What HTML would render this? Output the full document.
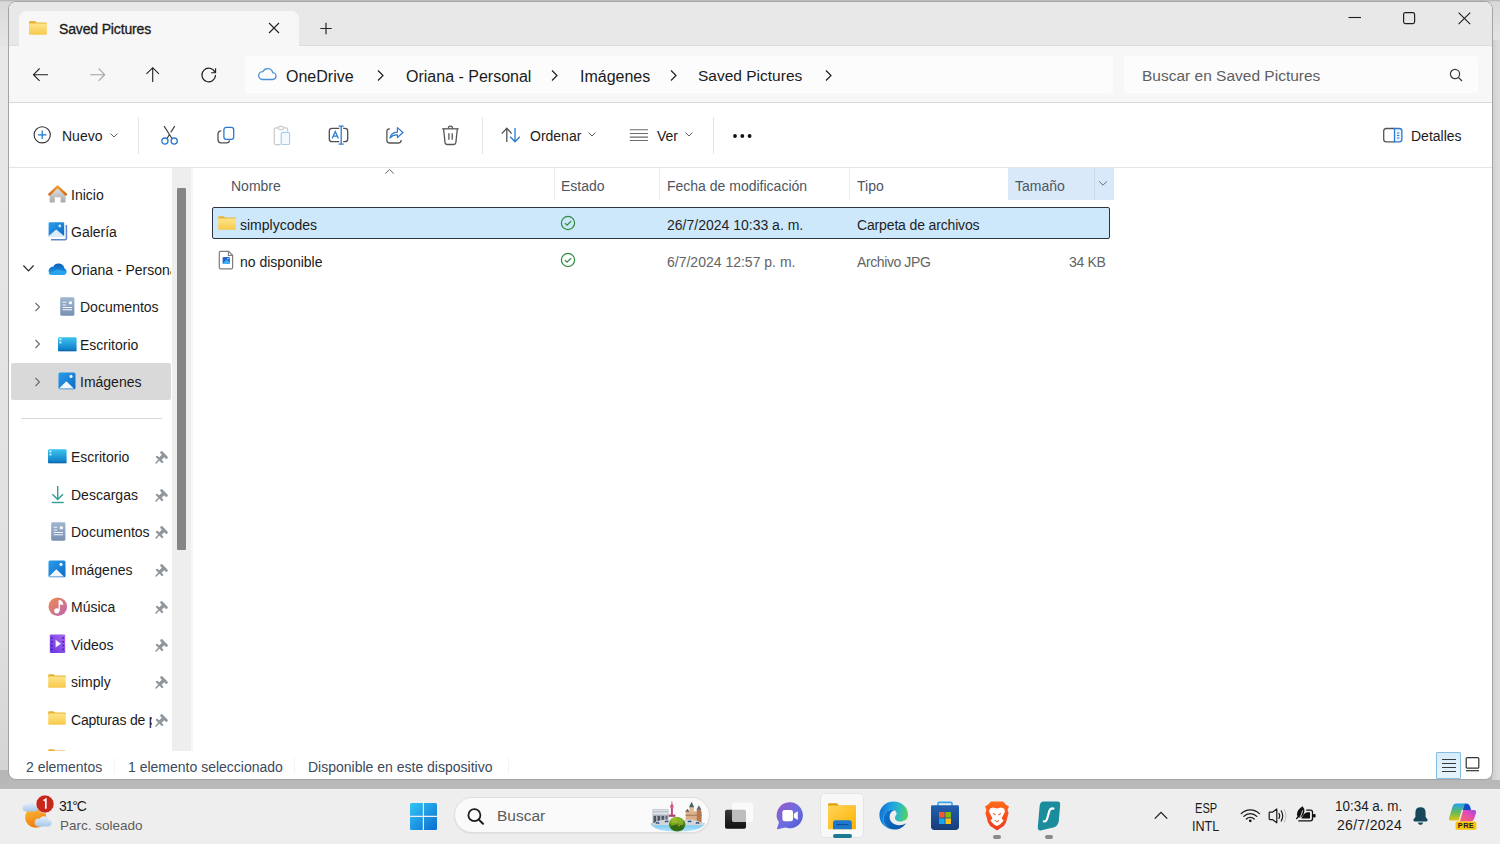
<!DOCTYPE html>
<html><head><meta charset="utf-8">
<style>
*{box-sizing:border-box;margin:0;padding:0}
html,body{width:1500px;height:844px;overflow:hidden}
body{position:relative;background:#dcdcdc;font-family:"Liberation Sans",sans-serif;color:#1b1b1b}
.a{position:absolute}
.t{position:absolute;white-space:nowrap;font-size:14px;line-height:20px}
.t16{position:absolute;white-space:nowrap;font-size:16px;line-height:22px}
svg{position:absolute;overflow:visible}
#desk{left:0;top:0;width:1500px;height:789px;background:linear-gradient(#b0b0b0 0,#d9d9d9 2px,#e4e4e4 40px,#e6e6e6 100%)}
#win{left:8px;top:1px;width:1485px;height:779px;border:1px solid #a4a4a4;border-radius:8px;background:#fff;overflow:hidden}
#tabbar{left:0;top:0;width:1483px;height:45px;background:#e8e8e8}
#tab{left:10px;top:9px;width:280px;height:36px;background:#f7f7f7;border-radius:8px 8px 0 0}
#nav{left:0;top:43px;width:1483px;height:58px;background:#f7f7f7;border-top:1px solid #dcdcdc;border-bottom:1px solid #d9d9d9}
#addr{left:245px;top:56px;width:868px;height:37px;background:#fcfcfc;border-radius:3px}
#search{left:1124px;top:56px;width:354px;height:37px;background:#fcfcfc;border-radius:3px}
#cmd{left:0;top:101px;width:1483px;height:65px;background:#fff;border-bottom:1px solid #e5e5e5}
.sep{position:absolute;width:1px;background:#e3e3e3}
#taskbar{left:0;top:789px;width:1500px;height:55px;background:#eeeeee;border-top:1px solid #f3f3f3}
.hdr{color:#4d5663}
.stat{color:#3c4a5c}
</style></head><body>
<div id="desk" class="a"></div>
<div class="a" style="left:0;top:770px;width:1500px;height:19px;background:linear-gradient(#b6b6b6,#b9b9b9)"></div>
<div class="a" style="left:1492px;top:40px;width:8px;height:740px;background:linear-gradient(90deg,#cfcfcf,#dedede)"></div>
<div class="a" style="left:0;top:46px;width:8px;height:724px;background:linear-gradient(#e8e8e8,#e0e0e0 80%,#d4d4d4)"></div>
<div id="win" class="a">
  <div id="tabbar" class="a"></div>
  <div id="tab" class="a"></div>
  <div id="nav" class="a"></div>
  <div class="a" style="left:10px;top:43px;width:280px;height:1px;background:#f7f7f7"></div>
  <div id="cmd" class="a"></div>
</div>
<div id="addr" class="a"></div>
<div id="search" class="a"></div>
<div id="taskbar" class="a"></div>
<!-- sidebar scroll track & thumb -->
<div class="a" style="left:172px;top:168px;width:19px;height:583px;background:#eeeeee"></div><div class="a" style="left:191px;top:168px;width:2px;height:583px;background:#f7f7f7"></div>
<div class="a" style="left:177px;top:188px;width:9px;height:362px;background:#858585;border-radius:1px"></div>
<!-- sidebar selection -->
<div class="a" style="left:11px;top:363px;width:160px;height:37px;background:#d9d9d9;border-radius:2px"></div>
<div class="a" style="left:21px;top:418px;width:141px;height:1px;background:#d9d9d9"></div>
<!-- header separators -->
<div class="sep" style="left:554px;top:168px;height:32px;background:#ececec"></div>
<div class="sep" style="left:659px;top:168px;height:32px;background:#ececec"></div>
<div class="sep" style="left:849px;top:168px;height:32px;background:#ececec"></div>
<div class="a" style="left:1008px;top:168px;width:106px;height:32px;background:#d9e9f9"></div>
<div class="a" style="left:1094px;top:168px;width:1px;height:32px;background:#c8dbee"></div>
<!-- selected row -->
<div class="a" style="left:212px;top:207px;width:898px;height:32px;background:#cde8fb;border:1px solid #2c3440;border-radius:2px"></div>
<!-- status separators -->
<div class="sep" style="left:114px;top:758px;height:16px;background:#f4f4f4"></div>
<div class="sep" style="left:294px;top:758px;height:16px;background:#f4f4f4"></div>
<div class="sep" style="left:508px;top:758px;height:16px;background:#f4f4f4"></div>
<!-- cmd separators -->
<div class="sep" style="left:138px;top:117px;height:37px;background:#e6e6e6"></div>
<div class="sep" style="left:482px;top:117px;height:37px;background:#e6e6e6"></div>
<div class="sep" style="left:713px;top:117px;height:37px;background:#e6e6e6"></div>
<!-- view toggle -->
<div class="a" style="left:1436px;top:752px;width:25px;height:27px;background:linear-gradient(#d6ecfa,#e8f4fc);border:1px solid #86bde0;border-radius:1px"></div>
<!-- taskbar search pill -->
<div class="a" style="left:454px;top:797px;width:256px;height:36px;background:#fafafa;border:1px solid #dedede;border-radius:18px;box-shadow:0 1px 1px rgba(0,0,0,0.06)"></div>
<!-- explorer active tile -->
<div class="a" style="left:820px;top:793px;width:44px;height:45px;background:#f8f8f8;border:1px solid #e4e4e4;border-radius:5px"></div>


<!-- tab -->
<div class="t" style="left:59px;top:19px;letter-spacing:-0.15px;-webkit-text-stroke:0.3px #1a1a1a;color:#1a1a1a">Saved Pictures</div>
<!-- address -->
<div class="t16" style="left:286px;top:66px">OneDrive</div>
<div class="t16" style="left:406px;top:66px">Oriana - Personal</div>
<div class="t16" style="left:580px;top:66px">Imágenes</div>
<div class="t16" style="left:698px;top:65px;font-size:15.5px">Saved Pictures</div>
<div class="t16" style="left:1142px;top:65px;font-size:15.5px;color:#5f5f5f">Buscar en Saved Pictures</div>
<!-- commands -->
<div class="t" style="left:62px;top:126px">Nuevo</div>
<div class="t" style="left:530px;top:126px">Ordenar</div>
<div class="t" style="left:657px;top:126px">Ver</div>
<div class="t" style="left:1411px;top:126px">Detalles</div>
<!-- sidebar -->
<div class="t" style="left:71px;top:185px">Inicio</div>
<div class="t" style="left:71px;top:222px">Galería</div>
<div class="a" style="left:71px;top:259px;width:100px;height:22px;overflow:hidden"><div class="t" style="left:0;top:1px">Oriana - Personal</div></div>
<div class="t" style="left:80px;top:297px">Documentos</div>
<div class="t" style="left:80px;top:335px">Escritorio</div>
<div class="t" style="left:80px;top:372px">Imágenes</div>
<div class="t" style="left:71px;top:447px">Escritorio</div>
<div class="t" style="left:71px;top:485px">Descargas</div>
<div class="t" style="left:71px;top:522px">Documentos</div>
<div class="t" style="left:71px;top:560px">Imágenes</div>
<div class="t" style="left:71px;top:597px">Música</div>
<div class="t" style="left:71px;top:635px">Videos</div>
<div class="t" style="left:71px;top:672px">simply</div>
<div class="a" style="left:71px;top:708px;width:81px;height:22px;overflow:hidden"><div class="t" style="left:0;top:2px;letter-spacing:-0.2px">Capturas de pantalla</div></div>
<!-- header -->
<div class="t hdr" style="left:231px;top:176px">Nombre</div>
<div class="t hdr" style="left:561px;top:176px">Estado</div>
<div class="t hdr" style="left:667px;top:176px">Fecha de modificación</div>
<div class="t hdr" style="left:857px;top:176px">Tipo</div>
<div class="t hdr" style="left:1015px;top:176px">Tamaño</div>
<!-- rows -->
<div class="t" style="left:240px;top:215px">simplycodes</div>
<div class="t" style="left:667px;top:215px;color:#1f1f1f">26/7/2024 10:33 a. m.</div>
<div class="t" style="left:857px;top:215px;color:#1f1f1f;letter-spacing:-0.15px">Carpeta de archivos</div>
<div class="t" style="left:240px;top:252px">no disponible</div>
<div class="t" style="left:667px;top:252px;color:#646464">6/7/2024 12:57 p. m.</div>
<div class="t" style="left:857px;top:252px;color:#646464;letter-spacing:-0.4px">Archivo JPG</div>
<div class="t" style="left:1069px;top:252px;color:#646464;letter-spacing:-0.3px">34 KB</div>
<!-- status -->
<div class="t stat" style="left:26px;top:757px">2 elementos</div>
<div class="t stat" style="left:128px;top:757px">1 elemento seleccionado</div>
<div class="t stat" style="left:308px;top:757px">Disponible en este dispositivo</div>
<!-- taskbar text -->
<div class="t" style="left:59px;top:796px;letter-spacing:-1.1px;color:#1a1a1a">31°C</div>
<div class="t" style="left:60px;top:816px;font-size:13.5px;color:#5c5c5c">Parc. soleado</div>
<div class="t" style="left:497px;top:806px;font-size:15.5px;color:#5a5a5a">Buscar</div>
<div class="t" style="left:1195px;top:798px;transform:scaleX(0.79);transform-origin:0 0">ESP</div>
<div class="t" style="left:1192px;top:816px;transform:scaleX(0.9);transform-origin:0 0">INTL</div>
<div class="t" style="left:1335px;top:796px;transform:scaleX(0.96);transform-origin:0 0">10:34 a. m.</div>
<div class="t" style="left:1337px;top:815px;letter-spacing:0.3px">26/7/2024</div>

<!-- tab folder icon -->
<svg style="left:28px;top:20px" width="20" height="16" viewBox="0 0 20 16">
<defs><linearGradient id="fg" x1="0" y1="0" x2="0" y2="1"><stop offset="0" stop-color="#fde58a"/><stop offset="1" stop-color="#f7c94a"/></linearGradient></defs>
<path d="M1 2.2 Q1 1 2.2 1 H7 L8.6 2.6 H17.6 Q18.8 2.6 18.8 3.8 V5 H1 Z" fill="#e9b535"/>
<rect x="1" y="3.6" width="17.8" height="11.2" rx="1" fill="url(#fg)"/>
</svg>
<!-- tab close -->
<svg style="left:268px;top:22px" width="12" height="12" viewBox="0 0 12 12"><path d="M1 1 L11 11 M11 1 L1 11" stroke="#1f1f1f" stroke-width="1.1"/></svg>
<!-- plus -->
<svg style="left:320px;top:22px" width="12" height="13" viewBox="0 0 12 13"><path d="M6 0.8 V12.2 M0.3 6.5 H11.7" stroke="#262626" stroke-width="1.2"/></svg>
<!-- window controls -->
<svg style="left:1348px;top:16px" width="14" height="3" viewBox="0 0 14 3"><path d="M0.5 1.5 H13" stroke="#1f1f1f" stroke-width="1.1"/></svg>
<svg style="left:1402px;top:11px" width="14" height="14" viewBox="0 0 14 14"><rect x="1.6" y="1.6" width="11" height="11" rx="1.8" fill="none" stroke="#1f1f1f" stroke-width="1.2"/></svg>
<svg style="left:1458px;top:12px" width="13" height="13" viewBox="0 0 13 13"><path d="M0.6 0.6 L12.2 12.2 M12.2 0.6 L0.6 12.2" stroke="#1f1f1f" stroke-width="1.1"/></svg>
<!-- nav arrows -->
<svg style="left:32px;top:66px" width="18" height="18" viewBox="0 0 18 18"><path d="M16 8.7 H1.8 M7.6 2.5 L1.5 8.7 L7.6 14.9" fill="none" stroke="#1f1f1f" stroke-width="1.1"/></svg>
<svg style="left:89px;top:66px" width="18" height="18" viewBox="0 0 18 18"><path d="M1.2 8.7 H15.4 M9.6 2.5 L15.7 8.7 L9.6 14.9" fill="none" stroke="#a3a3a3" stroke-width="1.1"/></svg>
<svg style="left:144px;top:66px" width="18" height="18" viewBox="0 0 18 18"><path d="M8.7 16 V1.9 M2.5 7.9 L8.7 1.7 L14.9 7.9" fill="none" stroke="#1f1f1f" stroke-width="1.1"/></svg>
<svg style="left:200px;top:66px" width="18" height="18" viewBox="0 0 18 18"><path d="M14.9 6.2 A6.8 6.8 0 1 0 15.5 9.1" fill="none" stroke="#1f1f1f" stroke-width="1.1"/><path d="M15.6 2.2 V6.7 H11.1" fill="none" stroke="#1f1f1f" stroke-width="1.1"/></svg>
<!-- address cloud -->
<svg style="left:257px;top:66px" width="20" height="16" viewBox="0 0 20 16"><path d="M5.3 13.5 H15.4 A3.4 3.4 0 0 0 15.8 6.7 A5.2 5.2 0 0 0 6 5.6 A3.9 3.9 0 0 0 5.3 13.5 Z" fill="none" stroke="#4a8fd6" stroke-width="1.3"/></svg>
<!-- breadcrumb chevrons -->
<svg style="left:376px;top:69px" width="10" height="13" viewBox="0 0 10 13"><path d="M2 1.5 L7 6.5 L2 11.5" fill="none" stroke="#1f1f1f" stroke-width="1.2"/></svg>
<svg style="left:550px;top:69px" width="10" height="13" viewBox="0 0 10 13"><path d="M2 1.5 L7 6.5 L2 11.5" fill="none" stroke="#1f1f1f" stroke-width="1.2"/></svg>
<svg style="left:669px;top:69px" width="10" height="13" viewBox="0 0 10 13"><path d="M2 1.5 L7 6.5 L2 11.5" fill="none" stroke="#1f1f1f" stroke-width="1.2"/></svg>
<svg style="left:824px;top:69px" width="10" height="13" viewBox="0 0 10 13"><path d="M2 1.5 L7 6.5 L2 11.5" fill="none" stroke="#1f1f1f" stroke-width="1.2"/></svg>
<!-- search icon -->
<svg style="left:1449px;top:68px" width="15" height="15" viewBox="0 0 15 15"><circle cx="6" cy="6" r="4.6" fill="none" stroke="#3a3a3a" stroke-width="1.2"/><path d="M9.4 9.4 L13 13" stroke="#3a3a3a" stroke-width="1.3"/></svg>
<!-- Nuevo plus -->
<svg style="left:33px;top:126px" width="19" height="19" viewBox="0 0 19 19"><circle cx="9.2" cy="8.8" r="8.1" fill="none" stroke="#2e2e2e" stroke-width="1.1"/><path d="M9.2 4.6 V13 M5 8.8 H13.4" stroke="#1a73cf" stroke-width="1.2"/></svg>
<svg style="left:109px;top:132px" width="10" height="7" viewBox="0 0 10 7"><path d="M1.5 1.5 L5 5 L8.5 1.5" fill="none" stroke="#606060" stroke-width="1"/></svg>
<!-- scissors -->
<svg style="left:160px;top:124px" width="20" height="22" viewBox="0 0 20 22"><path d="M4.1 2.1 L12.5 15.2 M14.7 2.1 L10.8 8.4 M9.5 10.4 L6.6 15.2" fill="none" stroke="#3a3a3a" stroke-width="1.1"/><circle cx="4.9" cy="17.1" r="3.1" fill="#fff" stroke="#2d7ad0" stroke-width="1.3"/><circle cx="14.2" cy="17.1" r="3.1" fill="#fff" stroke="#2d7ad0" stroke-width="1.3"/></svg>
<!-- copy -->
<svg style="left:216px;top:126px" width="20" height="18" viewBox="0 0 20 18"><path d="M5.3 4.8 Q2 4.8 2 8 V13.8 Q2 16.8 5 16.8 H10.8 Q13.2 16.8 13.6 14.4" fill="none" stroke="#505050" stroke-width="1.3"/><rect x="7.9" y="1.3" width="9.8" height="12" rx="2.4" fill="#fff" stroke="#2d7ad0" stroke-width="1.3"/></svg>
<!-- paste disabled -->
<svg style="left:272px;top:125px" width="20" height="21" viewBox="0 0 20 21"><path d="M8.5 19.6 H4 Q2.3 19.6 2.3 17.9 V4.6 Q2.3 2.9 4 2.9 H14 Q15.6 2.9 15.6 4.6 V6.5" fill="none" stroke="#c9c9c9" stroke-width="1.2"/><rect x="6.3" y="1.4" width="5.3" height="3.2" rx="1.5" fill="#fff" stroke="#c9c9c9" stroke-width="1.1"/><rect x="9.2" y="7.3" width="8.4" height="12.2" rx="1.6" fill="#f4f9fe" stroke="#a9cdf0" stroke-width="1.2"/></svg>
<!-- rename -->
<svg style="left:328px;top:125px" width="22" height="21" viewBox="0 0 22 21"><path d="M11.3 3.4 H4 Q1.3 3.4 1.3 6.1 V13.9 Q1.3 16.6 4 16.6 H11.3 M15.2 3.4 H17 Q19.7 3.4 19.7 6.1 V13.9 Q19.7 16.6 17 16.6 H15.2" fill="none" stroke="#4f4f4f" stroke-width="1.3"/><path d="M4.2 13.6 L7.3 6.5 L10.4 13.6 M5.3 11.2 H9.3" fill="none" stroke="#2d7ad0" stroke-width="1.3"/><path d="M13.2 1.2 V19.2 M10.7 1.2 H15.7 M10.7 19.2 H15.7" fill="none" stroke="#2d7ad0" stroke-width="1.3"/></svg>
<!-- share -->
<svg style="left:385px;top:125px" width="20" height="20" viewBox="0 0 20 20"><path d="M4.9 3.8 H4.3 Q1.9 3.8 1.9 6.3 V15.6 Q1.9 18 4.3 18 H13.7 Q16.1 18 16.1 15.6 V14.9" fill="none" stroke="#555" stroke-width="1.3"/><path d="M4.9 13 Q6 7.3 12.4 7.1 V2.6 L18 7.5 L12.4 12.5 V9.9 Q7.8 9.6 4.9 13 Z" fill="#fff" stroke="#2d7ad0" stroke-width="1.2" stroke-linejoin="round"/></svg>
<!-- trash -->
<svg style="left:441px;top:125px" width="19" height="21" viewBox="0 0 19 21"><path d="M1.2 3.8 H17.7" stroke="#555" stroke-width="1.3"/><path d="M7.3 3.5 Q7.3 1.2 9.45 1.2 Q11.6 1.2 11.6 3.5" fill="none" stroke="#555" stroke-width="1.2"/><path d="M2.6 4 L4 17.4 Q4.3 19.5 6.3 19.5 H12.6 Q14.6 19.5 14.9 17.4 L16.3 4" fill="none" stroke="#555" stroke-width="1.3"/><path d="M7.9 8.2 V14.8 M11.2 8.2 V14.8" stroke="#555" stroke-width="1.3"/></svg>
<!-- sort -->
<svg style="left:500px;top:126px" width="22" height="18" viewBox="0 0 22 18"><path d="M6.8 16 V2.2 M1.8 7.6 L6.8 2.2 L11.6 7.6" fill="none" stroke="#555" stroke-width="1.3"/><path d="M15 2 V15.6 M10.2 10.8 L15 15.8 L19.8 10.8" fill="none" stroke="#2d7ad0" stroke-width="1.3"/></svg>
<svg style="left:587px;top:131px" width="10" height="7" viewBox="0 0 10 7"><path d="M1.5 1.5 L5 5 L8.5 1.5" fill="none" stroke="#606060" stroke-width="1"/></svg>
<!-- view lines -->
<svg style="left:629px;top:128px" width="20" height="14" viewBox="0 0 20 14"><path d="M0.8 1.8 H19 M0.8 5.5 H19 M0.8 9.1 H19 M0.8 12.5 H19" stroke="#6b6b6b" stroke-width="1.1"/></svg>
<svg style="left:684px;top:131px" width="10" height="7" viewBox="0 0 10 7"><path d="M1.5 1.5 L5 5 L8.5 1.5" fill="none" stroke="#606060" stroke-width="1"/></svg>
<!-- more -->
<svg style="left:731px;top:132px" width="22" height="8" viewBox="0 0 22 8"><circle cx="4" cy="4" r="1.9" fill="#111"/><circle cx="11.3" cy="4" r="1.9" fill="#111"/><circle cx="18.6" cy="4" r="1.9" fill="#111"/></svg>
<!-- details -->
<svg style="left:1382px;top:127px" width="22" height="17" viewBox="0 0 22 17"><path d="M12.6 1.5 H4.3 Q1.7 1.5 1.7 4.1 V12.3 Q1.7 14.9 4.3 14.9 H12.6" fill="none" stroke="#555" stroke-width="1.3"/><path d="M12.5 1.5 H17.3 Q19.9 1.5 19.9 4.1 V12.3 Q19.9 14.9 17.3 14.9 H12.5 Z" fill="#e9f4fd" stroke="#2d7ad0" stroke-width="1.3"/><path d="M15 6 H17.3 M15 8.5 H17.3 M15 11 H17.3" stroke="#2d7ad0" stroke-width="1"/></svg>
<svg style="left:48px;top:184px" width="20" height="20" viewBox="0 0 20 20"><defs><linearGradient id="hw" x1="0" y1="0" x2="0" y2="1"><stop offset="0" stop-color="#e6e6e6"/><stop offset="1" stop-color="#a9a9a9"/></linearGradient><linearGradient id="hr" x1="0" y1="0" x2="0" y2="1"><stop offset="0" stop-color="#f0a032"/><stop offset="1" stop-color="#d4691a"/></linearGradient></defs>
<path d="M1.6 10 L9.6 2.6 L17.6 10 V17.6 Q17.6 18.6 16.6 18.6 H12.6 V13.2 H6.8 V18.6 H2.6 Q1.6 18.6 1.6 17.6 Z" fill="url(#hw)"/>
<path d="M1.4 10.4 L9.6 2.6 L17.9 10.4" fill="none" stroke="url(#hr)" stroke-width="2.6" stroke-linejoin="round" stroke-linecap="round"/></svg>
<svg style="left:48px;top:221px" width="20" height="20" viewBox="0 0 20 20"><defs><linearGradient id="gb" x1="0" y1="0" x2="1" y2="1"><stop offset="0" stop-color="#2aa0ee"/><stop offset="1" stop-color="#0c66c0"/></linearGradient></defs>
<path d="M3 18.8 H17.2 Q18.4 18.8 18.4 17.6 V4" fill="none" stroke="#5a88c6" stroke-width="1.5"/>
<rect x="0.6" y="1.2" width="15.6" height="14.8" rx="1.4" fill="url(#gb)"/>
<path d="M0.6 15 L8.2 8.4 L16.2 15 V16 H0.6 Z" fill="#dcecfb"/>
<circle cx="11.8" cy="5" r="1.4" fill="#cfe6fa"/></svg>
<svg style="left:47px;top:261px" width="21" height="15" viewBox="0 0 21 15"><defs><linearGradient id="odg" x1="0" y1="0" x2="0" y2="1"><stop offset="0" stop-color="#0b5fb8"/><stop offset="0.5" stop-color="#1380d6"/><stop offset="1" stop-color="#2aa6ec"/></linearGradient></defs><path d="M5.2 14 H16.8 A3.6 3.6 0 0 0 17.4 7.2 A6 6 0 0 0 6.2 5.8 A4.1 4.1 0 0 0 5.2 14 Z" fill="url(#odg)"/><path d="M1.6 12.6 L10.4 8.6 L19.6 10.8 A3.6 3.6 0 0 1 16.8 14 H5.2 A4.1 4.1 0 0 1 1.6 12.6 Z" fill="#2aa4ec"/></svg>
<svg style="left:60px;top:297px" width="15" height="19" viewBox="0 0 15 19"><defs><linearGradient id="dg60297" x1="0" y1="0" x2="0" y2="1"><stop offset="0" stop-color="#9fb6d0"/><stop offset="1" stop-color="#7891b2"/></linearGradient></defs><rect x="0.2" y="0.3" width="14.2" height="18.4" rx="1.4" fill="url(#dg60297)"/><path d="M2.6 5.3 H6.2 M2.6 8 H6.2 M2.6 10.5 H12 M2.6 12.8 H12" stroke="#f2f6fb" stroke-width="1.1"/><rect x="8.8" y="4.4" width="3.2" height="2.8" fill="#f2f6fb"/></svg>
<svg style="left:58px;top:337px" width="19" height="15" viewBox="0 0 19 15"><defs><linearGradient id="dk58337" x1="0" y1="0" x2="0" y2="1"><stop offset="0" stop-color="#3cc4f0"/><stop offset="1" stop-color="#0b78c4"/></linearGradient></defs><rect x="0" y="0.2" width="18.6" height="14" rx="1.3" fill="url(#dk58337)"/><rect x="0" y="12.8" width="18.6" height="1.4" fill="#0a5e9e" opacity="0.6"/><rect x="1.4" y="1.5" width="2" height="1.8" fill="#d8f3fd"/><rect x="1.4" y="4.6" width="2" height="1.8" fill="#d8f3fd"/></svg>
<svg style="left:58px;top:372px" width="18" height="18" viewBox="0 0 18 18"><defs><linearGradient id="pc58372" x1="0" y1="0" x2="1" y2="1"><stop offset="0" stop-color="#2a9cec"/><stop offset="1" stop-color="#0e6cc6"/></linearGradient></defs><rect x="0.5" y="0.5" width="17" height="16.8" rx="1.6" fill="url(#pc58372)"/><path d="M1 16.4 L8.3 9.3 L15.9 16.4 Z" fill="#f0f7fe"/><circle cx="13" cy="4.4" r="1.6" fill="#e9f4fe"/></svg>
<svg style="left:22px;top:264px" width="13" height="9" viewBox="0 0 13 9"><path d="M1.4 1.5 L6.5 6.8 L11.6 1.5" fill="none" stroke="#2a2a2a" stroke-width="1.2"/></svg>
<svg style="left:34px;top:302px" width="8" height="10" viewBox="0 0 8 10"><path d="M1.5 1 L5.5 5 L1.5 9" fill="none" stroke="#6a6a6a" stroke-width="1.1"/></svg>
<svg style="left:34px;top:339px" width="8" height="10" viewBox="0 0 8 10"><path d="M1.5 1 L5.5 5 L1.5 9" fill="none" stroke="#6a6a6a" stroke-width="1.1"/></svg>
<svg style="left:34px;top:377px" width="8" height="10" viewBox="0 0 8 10"><path d="M1.5 1 L5.5 5 L1.5 9" fill="none" stroke="#6a6a6a" stroke-width="1.1"/></svg>
<svg style="left:48px;top:449px" width="19" height="15" viewBox="0 0 19 15"><defs><linearGradient id="dk48449" x1="0" y1="0" x2="0" y2="1"><stop offset="0" stop-color="#3cc4f0"/><stop offset="1" stop-color="#0b78c4"/></linearGradient></defs><rect x="0" y="0.2" width="18.6" height="14" rx="1.3" fill="url(#dk48449)"/><rect x="0" y="12.8" width="18.6" height="1.4" fill="#0a5e9e" opacity="0.6"/><rect x="1.4" y="1.5" width="2" height="1.8" fill="#d8f3fd"/><rect x="1.4" y="4.6" width="2" height="1.8" fill="#d8f3fd"/></svg>
<svg style="left:50px;top:485px" width="15" height="19" viewBox="0 0 15 19"><path d="M7.7 0.9 V14.2 M2.4 9.3 L7.7 14.4 L12.9 9.3" fill="none" stroke="#2c9e92" stroke-width="1.4"/><path d="M1.8 17.5 H13.7" stroke="#2c9e92" stroke-width="1.4"/></svg>
<svg style="left:51px;top:522px" width="15" height="19" viewBox="0 0 15 19"><defs><linearGradient id="dg48522" x1="0" y1="0" x2="0" y2="1"><stop offset="0" stop-color="#9fb6d0"/><stop offset="1" stop-color="#7891b2"/></linearGradient></defs><rect x="0.2" y="0.3" width="14.2" height="18.4" rx="1.4" fill="url(#dg48522)"/><path d="M2.6 5.3 H6.2 M2.6 8 H6.2 M2.6 10.5 H12 M2.6 12.8 H12" stroke="#f2f6fb" stroke-width="1.1"/><rect x="8.8" y="4.4" width="3.2" height="2.8" fill="#f2f6fb"/></svg>
<svg style="left:48px;top:560px" width="18" height="18" viewBox="0 0 18 18"><defs><linearGradient id="pc48560" x1="0" y1="0" x2="1" y2="1"><stop offset="0" stop-color="#2a9cec"/><stop offset="1" stop-color="#0e6cc6"/></linearGradient></defs><rect x="0.5" y="0.5" width="17" height="16.8" rx="1.6" fill="url(#pc48560)"/><path d="M1 16.4 L8.3 9.3 L15.9 16.4 Z" fill="#f0f7fe"/><circle cx="13" cy="4.4" r="1.6" fill="#e9f4fe"/></svg>
<svg style="left:48px;top:597px" width="20" height="20" viewBox="0 0 20 20"><defs><linearGradient id="mu" x1="0" y1="0" x2="1" y2="1"><stop offset="0" stop-color="#f58a48"/><stop offset="1" stop-color="#b766b8"/></linearGradient></defs><circle cx="9.8" cy="9.7" r="9.3" fill="url(#mu)"/><path d="M11.2 13.6 V3.6 Q14.3 4.2 14.6 7.3 L11.5 6.6" fill="#fff" stroke="#fff" stroke-width="1.3" stroke-linejoin="round"/><circle cx="8.8" cy="13.8" r="2.6" fill="#fff"/></svg>
<svg style="left:49px;top:634px" width="17" height="20" viewBox="0 0 17 20"><defs><linearGradient id="vd" x1="0" y1="1" x2="1" y2="0"><stop offset="0" stop-color="#6a35e0"/><stop offset="1" stop-color="#a566f2"/></linearGradient></defs><rect x="0.8" y="0.6" width="15.4" height="18.4" rx="1" fill="url(#vd)"/><g fill="#4a1ea0"><rect x="2" y="3.2" width="1.7" height="1.5"/><rect x="2" y="7" width="1.7" height="1.5"/><rect x="2" y="10.8" width="1.7" height="1.5"/><rect x="2" y="14.6" width="1.7" height="1.5"/><rect x="13.3" y="3.2" width="1.7" height="1.5"/><rect x="13.3" y="7" width="1.7" height="1.5"/><rect x="13.3" y="10.8" width="1.7" height="1.5"/><rect x="13.3" y="14.6" width="1.7" height="1.5"/></g><path d="M6.6 5.8 V13.6 L12 9.7 Z" fill="#f4eeff"/></svg>
<svg style="left:48px;top:674px" width="18" height="14" viewBox="0 0 18 14"><path d="M0.2 1.2 Q0.2 0.2 1.2 0.2 H5.6 L7 1.6 H16.8 Q17.8 1.6 17.8 2.6 V4 H0.2 Z" fill="#e8b232"/><rect x="0.2" y="2.4" width="17.6" height="11.4" rx="0.8" fill="url(#fg)"/></svg>
<svg style="left:48px;top:711px" width="18" height="14" viewBox="0 0 18 14"><path d="M0.2 1.2 Q0.2 0.2 1.2 0.2 H5.6 L7 1.6 H16.8 Q17.8 1.6 17.8 2.6 V4 H0.2 Z" fill="#e8b232"/><rect x="0.2" y="2.4" width="17.6" height="11.4" rx="0.8" fill="url(#fg)"/></svg>
<div class="a" style="left:48px;top:748px;width:18px;height:3px;overflow:hidden"><svg style="left:0;top:1px" width="18" height="14" viewBox="0 0 18 14"><path d="M0.2 1.2 Q0.2 0.2 1.2 0.2 H5.6 L7 1.6 H16.8 Q17.8 1.6 17.8 2.6 V4 H0.2 Z" fill="#e8b232"/><rect x="0.2" y="2.4" width="17.6" height="11.4" rx="0.8" fill="url(#fg)"/></svg>
</div>
<svg style="left:155px;top:451px" width="13" height="13" viewBox="0 0 13 13"><path d="M6.6 1.6 L11.4 6.4" stroke="#8f969c" stroke-width="2.8" stroke-linecap="round"/><path d="M9 4 L5 8" stroke="#8f969c" stroke-width="3.4"/><path d="M2 5.8 L7.2 11" stroke="#8f969c" stroke-width="2.2" stroke-linecap="round"/><path d="M4.2 8.8 L1 12" stroke="#8f969c" stroke-width="1.5" stroke-linecap="round"/></svg>
<svg style="left:155px;top:489px" width="13" height="13" viewBox="0 0 13 13"><path d="M6.6 1.6 L11.4 6.4" stroke="#8f969c" stroke-width="2.8" stroke-linecap="round"/><path d="M9 4 L5 8" stroke="#8f969c" stroke-width="3.4"/><path d="M2 5.8 L7.2 11" stroke="#8f969c" stroke-width="2.2" stroke-linecap="round"/><path d="M4.2 8.8 L1 12" stroke="#8f969c" stroke-width="1.5" stroke-linecap="round"/></svg>
<svg style="left:155px;top:526px" width="13" height="13" viewBox="0 0 13 13"><path d="M6.6 1.6 L11.4 6.4" stroke="#8f969c" stroke-width="2.8" stroke-linecap="round"/><path d="M9 4 L5 8" stroke="#8f969c" stroke-width="3.4"/><path d="M2 5.8 L7.2 11" stroke="#8f969c" stroke-width="2.2" stroke-linecap="round"/><path d="M4.2 8.8 L1 12" stroke="#8f969c" stroke-width="1.5" stroke-linecap="round"/></svg>
<svg style="left:155px;top:564px" width="13" height="13" viewBox="0 0 13 13"><path d="M6.6 1.6 L11.4 6.4" stroke="#8f969c" stroke-width="2.8" stroke-linecap="round"/><path d="M9 4 L5 8" stroke="#8f969c" stroke-width="3.4"/><path d="M2 5.8 L7.2 11" stroke="#8f969c" stroke-width="2.2" stroke-linecap="round"/><path d="M4.2 8.8 L1 12" stroke="#8f969c" stroke-width="1.5" stroke-linecap="round"/></svg>
<svg style="left:155px;top:601px" width="13" height="13" viewBox="0 0 13 13"><path d="M6.6 1.6 L11.4 6.4" stroke="#8f969c" stroke-width="2.8" stroke-linecap="round"/><path d="M9 4 L5 8" stroke="#8f969c" stroke-width="3.4"/><path d="M2 5.8 L7.2 11" stroke="#8f969c" stroke-width="2.2" stroke-linecap="round"/><path d="M4.2 8.8 L1 12" stroke="#8f969c" stroke-width="1.5" stroke-linecap="round"/></svg>
<svg style="left:155px;top:639px" width="13" height="13" viewBox="0 0 13 13"><path d="M6.6 1.6 L11.4 6.4" stroke="#8f969c" stroke-width="2.8" stroke-linecap="round"/><path d="M9 4 L5 8" stroke="#8f969c" stroke-width="3.4"/><path d="M2 5.8 L7.2 11" stroke="#8f969c" stroke-width="2.2" stroke-linecap="round"/><path d="M4.2 8.8 L1 12" stroke="#8f969c" stroke-width="1.5" stroke-linecap="round"/></svg>
<svg style="left:155px;top:676px" width="13" height="13" viewBox="0 0 13 13"><path d="M6.6 1.6 L11.4 6.4" stroke="#8f969c" stroke-width="2.8" stroke-linecap="round"/><path d="M9 4 L5 8" stroke="#8f969c" stroke-width="3.4"/><path d="M2 5.8 L7.2 11" stroke="#8f969c" stroke-width="2.2" stroke-linecap="round"/><path d="M4.2 8.8 L1 12" stroke="#8f969c" stroke-width="1.5" stroke-linecap="round"/></svg>
<svg style="left:155px;top:714px" width="13" height="13" viewBox="0 0 13 13"><path d="M6.6 1.6 L11.4 6.4" stroke="#8f969c" stroke-width="2.8" stroke-linecap="round"/><path d="M9 4 L5 8" stroke="#8f969c" stroke-width="3.4"/><path d="M2 5.8 L7.2 11" stroke="#8f969c" stroke-width="2.2" stroke-linecap="round"/><path d="M4.2 8.8 L1 12" stroke="#8f969c" stroke-width="1.5" stroke-linecap="round"/></svg>
<svg style="left:218px;top:216px" width="18" height="14" viewBox="0 0 18 14"><path d="M0.2 1.2 Q0.2 0.2 1.2 0.2 H5.6 L7 1.6 H16.8 Q17.8 1.6 17.8 2.6 V4 H0.2 Z" fill="#e8b232"/><rect x="0.2" y="2.4" width="17.6" height="11.4" rx="0.8" fill="url(#fg)"/></svg>
<svg style="left:218px;top:250px" width="16" height="20" viewBox="0 0 16 20"><path d="M2.6 1.3 H10.6 L14.6 5.3 V17.4 Q14.6 18.8 13.2 18.8 H2.6 Q1.3 18.8 1.3 17.4 V2.7 Q1.3 1.3 2.6 1.3 Z" fill="#fff" stroke="#7d7d7d" stroke-width="1.2"/><path d="M10.4 1.3 V5.5 H14.6" fill="none" stroke="#7d7d7d" stroke-width="1.1"/><defs><linearGradient id="jp" x1="0" y1="0" x2="1" y2="1"><stop offset="0" stop-color="#1f6fd0"/><stop offset="1" stop-color="#2a4fc0"/></linearGradient></defs><rect x="4.6" y="7" width="7.2" height="7" rx="1" fill="url(#jp)"/><path d="M4.6 13.4 L8.6 9.6 L11.8 12.4 V14 H4.6 Z" fill="#39b4f6"/><circle cx="10" cy="8.6" r="0.8" fill="#bfe3ff"/></svg>
<svg style="left:560px;top:215px" width="16" height="16" viewBox="0 0 16 16"><circle cx="8" cy="8" r="6.6" fill="none" stroke="#2f8a3e" stroke-width="1.2"/><path d="M4.9 8.1 L7.1 10.2 L11.1 6.1" fill="none" stroke="#2f8a3e" stroke-width="1.3"/></svg>
<svg style="left:560px;top:252px" width="16" height="16" viewBox="0 0 16 16"><circle cx="8" cy="8" r="6.6" fill="none" stroke="#2f8a3e" stroke-width="1.2"/><path d="M4.9 8.1 L7.1 10.2 L11.1 6.1" fill="none" stroke="#2f8a3e" stroke-width="1.3"/></svg>
<svg style="left:384px;top:168px" width="11" height="7" viewBox="0 0 11 7"><path d="M1.2 5.6 L5.5 1.4 L9.8 5.6" fill="none" stroke="#666" stroke-width="1"/></svg>
<svg style="left:1098px;top:180px" width="10" height="7" viewBox="0 0 10 7"><path d="M1.2 1.4 L5 5.2 L8.8 1.4" fill="none" stroke="#5a6a7a" stroke-width="1"/></svg>
<svg style="left:1441px;top:757px" width="17" height="17" viewBox="0 0 17 17"><path d="M1 2.5 H15 M1 6.5 H15 M1 10.5 H15 M1 14.5 H15" stroke="#3a3a3a" stroke-width="1.1"/></svg>
<svg style="left:1464px;top:756px" width="17" height="17" viewBox="0 0 17 17"><rect x="2.2" y="1.6" width="12.6" height="10.6" rx="1" fill="none" stroke="#333" stroke-width="1.2"/><path d="M2 14.7 H15" stroke="#333" stroke-width="1.2"/></svg>

<!-- weather -->
<svg style="left:20px;top:794px" width="36" height="36" viewBox="0 0 36 36"><defs><linearGradient id="sun" x1="0" y1="0" x2="0.3" y2="1"><stop offset="0" stop-color="#fcc23a"/><stop offset="1" stop-color="#ef7d12"/></linearGradient><linearGradient id="cl" x1="0" y1="0" x2="0" y2="1"><stop offset="0" stop-color="#e4f0fb"/><stop offset="1" stop-color="#a9c8ea"/></linearGradient></defs>
<circle cx="15.8" cy="23.2" r="10.6" fill="url(#sun)"/>
<path d="M5.4 17.4 H15.6 A3 3 0 0 0 15.2 11.6 A4.4 4.4 0 0 0 7.2 10.4 A3.5 3.5 0 0 0 5.4 17.4 Z" fill="url(#cl)"/>
<path d="M17.6 32.4 H28.4 A3.2 3.2 0 0 0 28.2 26 A4.6 4.6 0 0 0 19.6 24.8 A3.8 3.8 0 0 0 17.6 32.4 Z" fill="url(#cl)"/>
<circle cx="25" cy="10" r="9" fill="#c8261c" stroke="#eeeeee" stroke-width="0.6"/>
<path d="M23.6 6.8 L25.8 5.3 V14.8" fill="none" stroke="#fff" stroke-width="1.7"/>
</svg>
<!-- windows logo -->
<svg style="left:410px;top:803px" width="28" height="28" viewBox="0 0 28 28"><defs><linearGradient id="wl" x1="0" y1="0" x2="1" y2="1"><stop offset="0" stop-color="#33c6f6"/><stop offset="1" stop-color="#0a6dd1"/></linearGradient></defs>
<path d="M1.5 0 H12.8 V12.8 H0 V1.5 Q0 0 1.5 0 Z M14 0 H25.5 Q27 0 27 1.5 V12.8 H14 Z M0 14 H12.8 V27 H1.5 Q0 27 0 25.5 Z M14 14 H27 V25.5 Q27 27 25.5 27 H14 Z" fill="url(#wl)"/></svg>
<!-- search glass -->
<svg style="left:466px;top:807px" width="20" height="20" viewBox="0 0 20 20"><circle cx="8.4" cy="8.2" r="6" fill="none" stroke="#1c1c1c" stroke-width="1.8"/><path d="M12.8 12.6 L17 16.8" stroke="#1c1c1c" stroke-width="2" stroke-linecap="round"/></svg>
<!-- bing illustration -->
<svg style="left:650px;top:801px" width="56" height="32" viewBox="0 0 56 32"><defs><linearGradient id="wt" x1="0" y1="0" x2="0" y2="1"><stop offset="0" stop-color="#5cc0f4"/><stop offset="1" stop-color="#b8e4fb"/></linearGradient></defs>
<path d="M0.5 22.6 Q27 20 55 22.6 Q51 30.6 27 30.6 Q4 30.6 0.5 22.6 Z" fill="url(#wt)"/>
<rect x="2.6" y="8.2" width="15.8" height="14" fill="#a9afb6"/><rect x="3.2" y="8.6" width="14.6" height="5" fill="#dfe4ea"/><path d="M3.2 10.8 H17.8" stroke="#8a939c" stroke-width="0.6"/><rect x="3.6" y="15" width="2.4" height="7.4" fill="#4d5660"/><rect x="7.6" y="15" width="2.4" height="7.4" fill="#4d5660"/><rect x="11.6" y="15" width="2.4" height="7.4" fill="#4d5660"/><rect x="15.4" y="15" width="2.2" height="7.4" fill="#6a737c"/>
<rect x="20.9" y="3.2" width="2" height="12" fill="#c2497a"/><circle cx="21.9" cy="5.6" r="1.8" fill="#d45a8c"/><rect x="18.6" y="13.6" width="6.8" height="2.2" fill="#a8456e"/><path d="M21.9 0.4 V3.4" stroke="#c2497a" stroke-width="0.8"/>
<rect x="35.6" y="10.4" width="16.4" height="12.4" fill="#dcae88"/><rect x="39.4" y="5.8" width="4.4" height="6" fill="#e4b892"/><path d="M39 6.2 L41.6 0.8 L44.2 6.2 Z" fill="#3e6a62"/><rect x="46.8" y="8.4" width="4.2" height="14.4" fill="#b77a4e"/><path d="M46.4 8.8 L48.9 4.2 L51.4 8.8 Z" fill="#606a70"/><path d="M35.2 10.8 L37.4 7.8 L39.6 10.8 Z" fill="#6a5a50"/><rect x="35.6" y="13.8" width="16.4" height="1" fill="#a07a5c"/>
<path d="M2 23 Q12 16.8 24 19.2 H33 Q43 16.8 54 23 V24.2 H2 Z" fill="#d2d6da"/><path d="M6 22.6 Q7.6 20.6 9.2 22.6 M15 21 Q16.6 19.2 18.2 21 M38 21 Q39.6 19.2 41.2 21 M46 22.6 Q47.6 20.6 49.2 22.6" fill="none" stroke="#2a4e7a" stroke-width="1.4"/>
<ellipse cx="27.2" cy="23.6" rx="8.2" ry="6.8" fill="#3f7d16"/><ellipse cx="26.8" cy="21" rx="7" ry="5" fill="#7aa820"/><ellipse cx="24.6" cy="19.2" rx="3.6" ry="2.8" fill="#96bc2c"/><ellipse cx="29.8" cy="19.6" rx="3.2" ry="2.6" fill="#88b226"/><ellipse cx="27.4" cy="26.6" rx="6.6" ry="3" fill="#2f6a14"/><circle cx="29" cy="24.4" r="1" fill="#c88a2a"/>
</svg>
<!-- task view -->
<svg style="left:724px;top:802px" width="30" height="28" viewBox="0 0 30 28"><defs><linearGradient id="tvd" x1="0" y1="0" x2="0" y2="1"><stop offset="0" stop-color="#3a3a3a"/><stop offset="1" stop-color="#111"/></linearGradient></defs>
<rect x="1" y="7.8" width="21" height="19" rx="1.8" fill="url(#tvd)"/>
<rect x="8" y="0.8" width="21" height="19" rx="1.8" fill="#fbfbfb" opacity="0.92"/>
<path d="M9.8 7.8 H20.2 Q22 7.8 22 9.6 V19.8 H9.8 Q8 19.8 8 18 V7.8 Z" fill="#bdbdbd"/>
</svg>
<!-- meet -->
<svg style="left:776px;top:801px" width="28" height="29" viewBox="0 0 28 29"><defs><linearGradient id="mt" x1="0" y1="0" x2="1" y2="1"><stop offset="0" stop-color="#9a58c6"/><stop offset="0.55" stop-color="#6a6ee0"/><stop offset="1" stop-color="#4f55d2"/></linearGradient></defs>
<path d="M14 1.2 A13 13 0 1 1 9.4 26.4 L1.6 28.2 Q0.8 28.3 1 27.4 L3 21.6 A13 13 0 0 1 14 1.2 Z" fill="url(#mt)"/>
<rect x="6.4" y="9" width="10.6" height="11.2" rx="2.2" fill="#fff"/><path d="M17.8 12.8 L21.8 10.2 V19 L17.8 16.4 Z" fill="#fff"/></svg>
<!-- explorer folder -->
<svg style="left:827px;top:802px" width="30" height="28" viewBox="0 0 30 28"><defs><linearGradient id="ex" x1="0" y1="0" x2="1" y2="1"><stop offset="0" stop-color="#ffd45a"/><stop offset="1" stop-color="#ffb300"/></linearGradient></defs>
<path d="M1 2.4 Q1 1.2 2.2 1.2 H10 L12 3.4 H28 Q29 3.4 29 4.4 V7 H1 Z" fill="#e0a010"/>
<rect x="1" y="3.6" width="28" height="23.6" rx="0.8" fill="url(#ex)"/>
<path d="M6 27.2 V20.8 Q6 18.2 8.6 18.2 H22.2 Q24.8 18.2 24.8 20.8 V27.2 Z" fill="#1d78cc"/>
<path d="M9.4 22.6 H21.4" stroke="#0e4f98" stroke-width="1.2"/></svg>
<div class="a" style="left:833px;top:834px;width:19px;height:4px;background:#1b7a92;border-radius:2px"></div>
<!-- edge -->
<svg style="left:878px;top:800px" width="31" height="31" viewBox="0 0 31 31"><defs><linearGradient id="eg1" x1="0" y1="0.4" x2="1" y2="0.6"><stop offset="0" stop-color="#1372d2"/><stop offset="0.35" stop-color="#1ea0e4"/><stop offset="0.7" stop-color="#33c0b4"/><stop offset="1" stop-color="#5ed34a"/></linearGradient><linearGradient id="eg2" x1="0" y1="0" x2="1" y2="1"><stop offset="0" stop-color="#0d7ad6"/><stop offset="1" stop-color="#0a4fa0"/></linearGradient></defs>
<path d="M15.5 1.5 C24 1.5 30 7.5 30 14.5 C30 19.5 26 21.5 22 21.5 C18.6 21.5 16.8 19.6 17 17.5 C17.2 16 18.6 15.5 18.6 13.6 C18.6 11.2 16.4 9.8 13.8 9.8 C9 9.8 5.6 14 5.6 19 C5.6 24.6 10.4 29.6 16.4 29.6 C7.6 29.6 1.4 22.8 1.4 15.2 C1.4 7.4 7.6 1.5 15.5 1.5 Z" fill="url(#eg1)"/>
<path d="M13.8 9.8 C9 9.8 5.6 14 5.6 19 C5.6 24.6 10.4 29.6 16.4 29.6 C21.4 29.6 25.6 27 28.2 23.2 C26.2 24.4 23.6 25.2 21.2 25.2 C15.6 25.2 11.6 21.6 11.6 17 C11.6 13.4 13.6 11 16.4 10.3 C15.6 9.96 14.7 9.8 13.8 9.8 Z" fill="url(#eg2)"/>
</svg>
<!-- store -->
<svg style="left:930px;top:801px" width="30" height="30" viewBox="0 0 30 30"><defs><linearGradient id="st" x1="0" y1="0" x2="0" y2="1"><stop offset="0" stop-color="#2160b0"/><stop offset="1" stop-color="#173c78"/></linearGradient></defs>
<path d="M8 5 V2.6 Q8 1.4 9.2 1.4 H20.8 Q22 1.4 22 2.6 V5" fill="none" stroke="#3aa6ee" stroke-width="1.6"/>
<path d="M1 5.4 Q1 4.2 2.2 4.2 H27.8 Q29 4.2 29 5.4 V25.6 Q29 29 25.6 29 H4.4 Q1 29 1 25.6 Z" fill="url(#st)"/>
<rect x="9" y="11" width="5.6" height="5.6" fill="#f25a2a"/><rect x="15.4" y="11" width="5.6" height="5.6" fill="#80bc10"/><rect x="9" y="17.4" width="5.6" height="5.6" fill="#12a8f0"/><rect x="15.4" y="17.4" width="5.6" height="5.6" fill="#ffbd10"/></svg>
<!-- brave -->
<svg style="left:984px;top:801px" width="26" height="30" viewBox="0 0 26 30"><defs><linearGradient id="br" x1="0" y1="0" x2="0" y2="1"><stop offset="0" stop-color="#ff6a1a"/><stop offset="1" stop-color="#f03a20"/></linearGradient></defs>
<path d="M7 0.6 H19 L22.4 4 L25 5.2 L23.6 9 L24.6 12 L22 21.4 Q20.6 24.8 17 26.8 L13 29.4 L9 26.8 Q5.4 24.8 4 21.4 L1.4 12 L2.4 9 L1 5.2 L3.6 4 Z" fill="url(#br)"/>
<path d="M6 7.4 L9.2 6.6 L13 7.6 L16.8 6.6 L20 7.4 L21 10.6 L19 14.6 L17.6 17.2 L19.6 19.8 L16 23.4 L13 25 L10 23.4 L6.4 19.8 L8.4 17.2 L7 14.6 L5 10.6 Z" fill="#fff"/>
<path d="M9 12.4 L11.6 14 M17 12.4 L14.4 14 M11 19.4 L13 20.6 L15 19.4" fill="none" stroke="#f25a2a" stroke-width="1.1"/></svg>
<div class="a" style="left:993px;top:835px;width:8px;height:4px;background:#8a8a8a;border-radius:2px"></div>
<!-- surfshark -->
<svg style="left:1037px;top:801px" width="24" height="30" viewBox="0 0 24 30"><path d="M6.6 0.6 H20.6 Q23.4 0.6 23.2 3.6 L21.8 20 Q21.2 24.4 17.4 26.2 L4.6 29.2 Q0.6 30.2 0.8 26 L2.6 5.6 Q3 0.6 6.6 0.6 Z" fill="#1b8c9c"/>
<path d="M16.4 7.6 Q13.8 6.6 12.4 9.6 L10 18.2 Q9 21 6.8 20.4" fill="none" stroke="#fff" stroke-width="2.2" stroke-linecap="round"/></svg>
<div class="a" style="left:1045px;top:835px;width:8px;height:4px;background:#8a8a8a;border-radius:2px"></div>
<!-- tray caret -->
<svg style="left:1153px;top:810px" width="16" height="11" viewBox="0 0 16 11"><path d="M1.8 8.6 L8 2.4 L14.2 8.6" fill="none" stroke="#1c1c1c" stroke-width="1.3"/></svg>
<!-- wifi -->
<svg style="left:1240px;top:808px" width="21" height="15" viewBox="0 0 21 15"><path d="M1.2 5.6 A13 13 0 0 1 19.4 5.6 M3.8 8.4 A9.2 9.2 0 0 1 16.8 8.4 M6.4 11 A5.4 5.4 0 0 1 14.2 11" fill="none" stroke="#1a1a1a" stroke-width="1.3" stroke-linecap="round"/><circle cx="10.3" cy="12.8" r="1.4" fill="#1a1a1a"/></svg>
<!-- volume -->
<svg style="left:1268px;top:808px" width="21" height="16" viewBox="0 0 21 16"><path d="M1.2 5 Q1.2 4.2 2 4.2 H4.4 L8.8 1 V14.8 L4.4 11.6 H2 Q1.2 11.6 1.2 10.8 Z" fill="none" stroke="#1a1a1a" stroke-width="1.2" stroke-linejoin="round"/><path d="M11 5.4 Q12.4 7.9 11 10.4 M13.2 2.8 Q16.2 7.9 13.2 13" fill="none" stroke="#1a1a1a" stroke-width="1.2" stroke-linecap="round"/><path d="M16 1.2 Q20 7.9 16 14.6" fill="none" stroke="#bcbcbc" stroke-width="1"/></svg>
<!-- battery -->
<svg style="left:1292px;top:802px" width="30" height="24" viewBox="0 0 30 24"><path d="M14.2 8.2 H18.4 Q20.5 8.2 20.5 10.3 V16.8 Q20.5 18.8 18.4 18.8 H6.3" fill="none" stroke="#111" stroke-width="1.3"/><rect x="21" y="12" width="2.6" height="3.4" rx="1" fill="#111"/><path d="M9.4 16.6 Q11.6 11 15 10.2 H18 V16.6 Z" fill="#111"/><path d="M10.5 4.2 Q4.6 8 4.9 12.6 Q5.2 15.4 7.6 15.8 Q11.6 14.4 12.4 9.4 Q12.6 6.4 10.5 4.2 Z" fill="#111"/><path d="M7 13.4 Q5.6 15.8 4.6 16.6" fill="none" stroke="#111" stroke-width="1.3" stroke-linecap="round"/><path d="M10.6 8.4 Q10 12.4 7.8 15.4" fill="none" stroke="#eee" stroke-width="0.9"/></svg>
<!-- bell -->
<svg style="left:1412px;top:806px" width="17" height="20" viewBox="0 0 17 20"><path d="M8.5 1.2 Q13.6 1.2 13.6 6.6 V11 L15.6 13.6 Q16 15.4 14.4 15.4 H2.6 Q1 15.4 1.4 13.6 L3.4 11 V6.6 Q3.4 1.2 8.5 1.2 Z" fill="#17475a"/><path d="M5.8 16.6 H11.2 Q10.6 19 8.5 19 Q6.4 19 5.8 16.6 Z" fill="#17475a"/></svg>
<!-- copilot -->
<svg style="left:1448px;top:802px" width="30" height="29" viewBox="0 0 30 29"><defs><linearGradient id="cp1" x1="0" y1="0" x2="0" y2="1"><stop offset="0" stop-color="#1fa2f0"/><stop offset="0.55" stop-color="#6cbc50"/><stop offset="1" stop-color="#e6c414"/></linearGradient><linearGradient id="cp2" x1="0" y1="1" x2="1" y2="0"><stop offset="0" stop-color="#ff6a5a"/><stop offset="0.6" stop-color="#e04ab8"/><stop offset="1" stop-color="#9a48e8"/></linearGradient></defs>
<path d="M8.6 1.6 H19 Q21.4 1.6 22.2 4.2 L23 7.8 H13.8 L10.6 18.6 H2.2 Q0.6 18.6 1 16.6 L4.4 5 Q5.4 1.6 8.6 1.6 Z" fill="url(#cp1)"/>
<path d="M17 1.8 Q20.6 1.4 21.8 4.4 L23 8 H15 Z" fill="#1848c8"/>
<path d="M15.2 8 H25.8 Q28.6 8 28 11 L25.8 17.4 Q24.6 19.4 22.6 19.4 H11.8 Z" fill="url(#cp2)"/>
<rect x="7.6" y="19.6" width="20.8" height="8.2" rx="1.6" fill="#f7c40c"/>
<text x="18" y="26.4" font-family="Liberation Sans" font-weight="bold" font-size="7.4" text-anchor="middle" fill="#1a1a1a" letter-spacing="0.4">PRE</text></svg>
<!--ICONS4-->
</body></html>
